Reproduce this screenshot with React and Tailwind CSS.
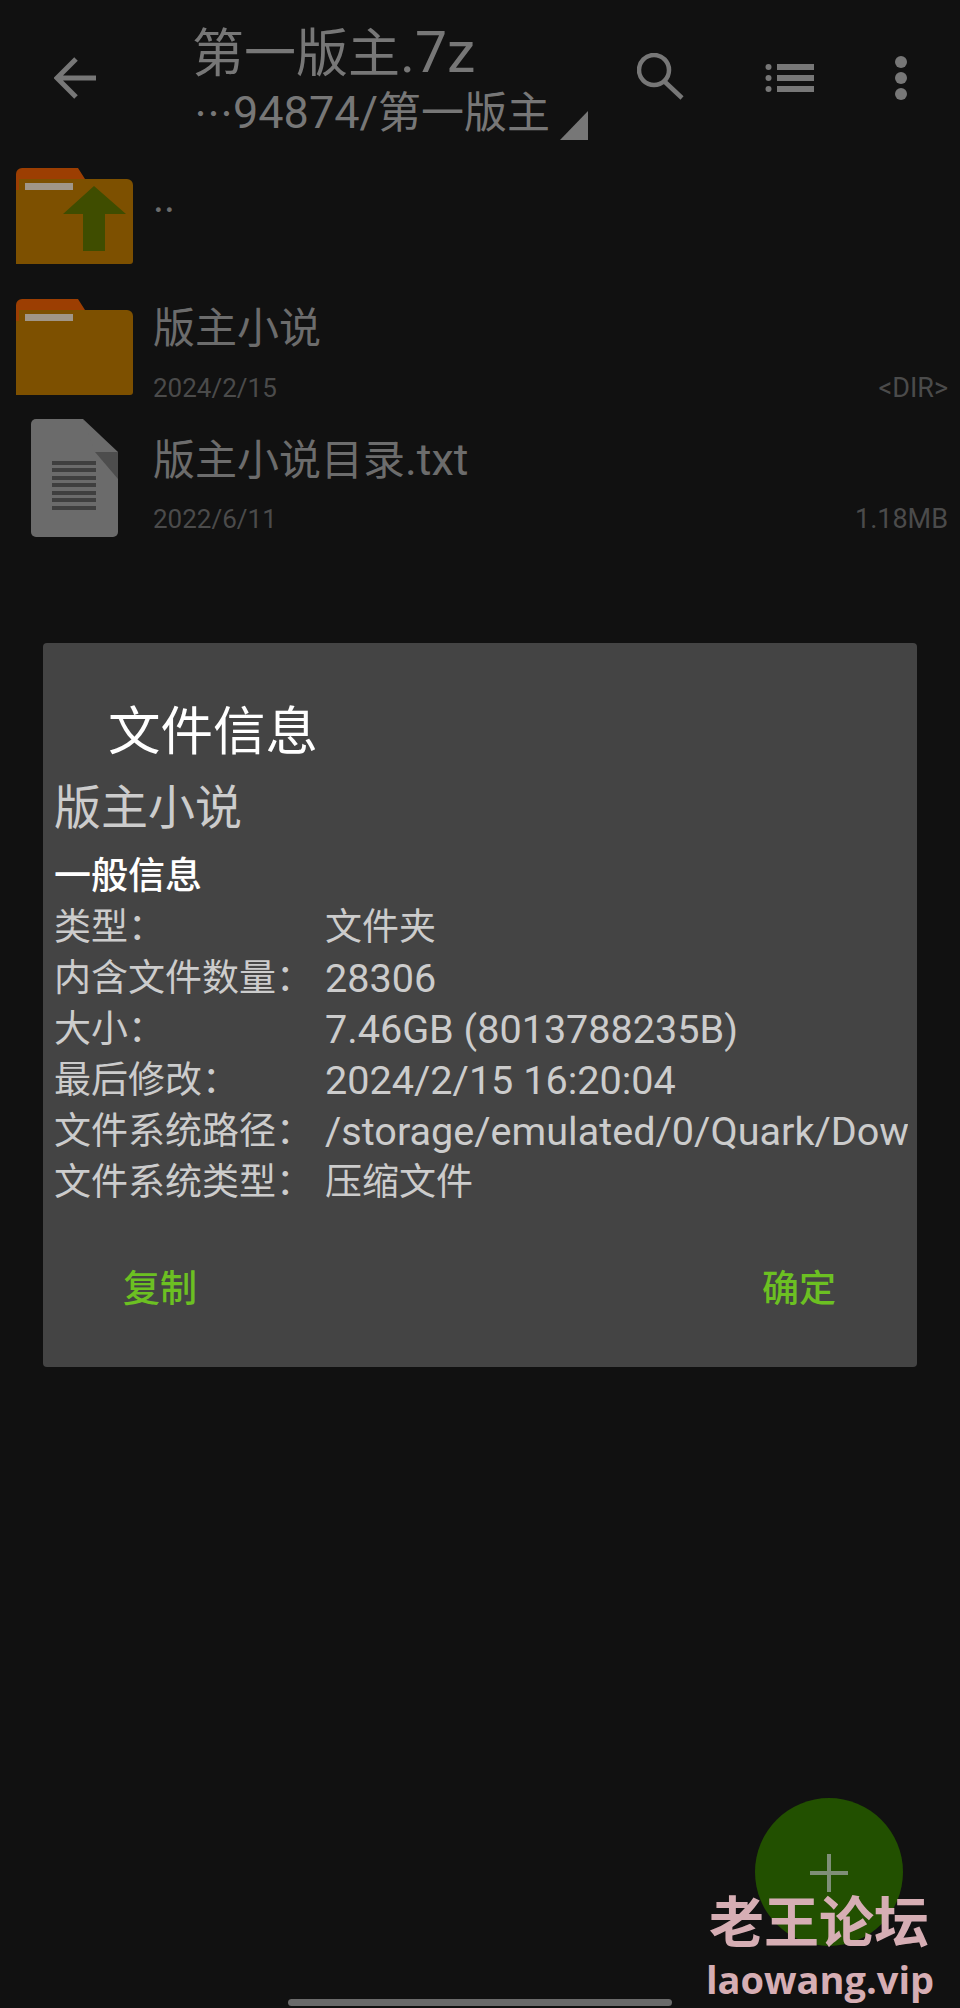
const font = { fontFamily: '"Roboto", "Noto Sans CJK SC", sans-serif' };

function FolderIcon({ up }) {
  return (
    <svg width="117" height="96" viewBox="0 0 117 96">
      <path d="M3 11H111a6 6 0 0 1 6 6V93a3 3 0 0 1-3 3H0V14a3 3 0 0 1 3-3Z" fill="#7d5000" />
      <path d="M0 22V6a6 6 0 0 1 6-6H62l7 11H3V22Z" fill="#9c3e02" />
      <rect x="9" y="15" width="48" height="7" fill="#a09688" />
      {up && <path d="M78 18 110 46H89V83H67V46H47Z" fill="#3f4d00" />}
    </svg>
  );
}

function DocIcon() {
  return (
    <svg width="87" height="118" viewBox="0 0 87 118">
      <path d="M5 0H52L87 58V113a5 5 0 0 1-5 5H5a5 5 0 0 1-5-5V5a5 5 0 0 1 5-5Z" fill="#6b6b6b" />
      <path d="M52 0 87 33H64Z" fill="#6b6b6b" />
      <path d="M64 33H87V60Z" fill="#4d4d4d" />
      {[42, 49, 57, 64, 72, 79, 87].map((y) => (
        <rect key={y} x="21" y={y} width="44" height="4" fill="#3f3f3f" />
      ))}
    </svg>
  );
}

// latin text in the reference runs a bit wider than the CJK next to it
function Latin({ children }) {
  return <span className="text-[1.07em]">{children}</span>;
}

function FileRow({ icon, name, date, size }) {
  return (
    <div className="flex h-[131px]">
      <div className="w-[153px] flex items-center justify-center pr-[4px] shrink-0">{icon}</div>
      <div className="flex-1 pr-[12px] pt-[23px]">
        <div className="h-[50px] text-[42px] leading-[50px] text-[#6c6c6c]">{name}</div>
        {date && (
          <div className="mt-[18px] flex justify-between text-[26px] leading-[32px] text-[#4b4b4b]">
            <span>{date}</span>
            <span className="text-[27px]">{size}</span>
          </div>
        )}
      </div>
    </div>
  );
}

const infoRows = [
  ["类型：", "文件夹"],
  ["内含文件数量：", <Latin>28306</Latin>],
  ["大小：", <Latin>7.46GB (8013788235B)</Latin>],
  ["最后修改：", <Latin>2024/2/15 16:20:04</Latin>],
  ["文件系统路径：", <Latin>/storage/emulated/0/Quark/Dow</Latin>],
  ["文件系统类型：", "压缩文件"],
];

function App() {
  return (
    <div className="relative h-[2008px] w-[960px] overflow-hidden bg-[#111111]" style={font}>
      <header className="flex h-[150px]">
        <div className="w-[194px] shrink-0 pl-[54px] pt-[57px]">
          <svg width="42" height="42" viewBox="0 0 42 42" fill="none" stroke="#777777" strokeWidth="5">
            <path d="M42 21H4M22 2 3 21l19 19" />
          </svg>
        </div>
        <div className="w-[420px] shrink-0 pt-[23px]">
          <div className="-ml-[2px] h-[60px] text-[52px] leading-[60px] text-[#777777]">
            第一版主<span className="text-[57px]">.7z</span>
          </div>
          <div className="mt-[5px] flex h-[50px] text-[43px] leading-[50px] text-[#777777]">
            <span className="whitespace-nowrap">
              <span className="text-[39px]">⋯</span>
              <span className="text-[45px]">94874/</span>第一版主
            </span>
            <svg className="ml-[10px] mt-[23px] shrink-0" width="28" height="29" viewBox="0 0 28 29">
              <path d="M28 0V29H0Z" fill="#777777" />
            </svg>
          </div>
        </div>
        <div className="pl-[23px] pt-[53px]">
          <svg width="47" height="47" viewBox="0 0 47 47" fill="none" stroke="#777777" strokeWidth="4.5">
            <circle cx="17" cy="17" r="15" />
            <path d="M27 28 45 45" />
          </svg>
        </div>
        <div className="pl-[81px] pt-[64px]">
          <svg width="49" height="28" viewBox="0 0 49 28" fill="#777777">
            <circle cx="3.5" cy="3" r="3" />
            <circle cx="3.5" cy="14" r="3" />
            <circle cx="3.5" cy="25" r="3" />
            <rect x="12" y="0" width="37" height="6" />
            <rect x="12" y="11" width="37" height="6" />
            <rect x="12" y="22" width="37" height="6" />
          </svg>
        </div>
        <div className="pl-[80px] pt-[56px]">
          <svg width="14" height="44" viewBox="0 0 14 44" fill="#777777">
            <circle cx="7" cy="6" r="6" />
            <circle cx="7" cy="22" r="6" />
            <circle cx="7" cy="38" r="6" />
          </svg>
        </div>
      </header>

      <FileRow icon={<FolderIcon up />} name=".." />
      <FileRow icon={<FolderIcon />} name="版主小说" date="2024/2/15" size="<DIR>" />
      <FileRow
        icon={<DocIcon />}
        name={<>版主小说目录<Latin>.txt</Latin></>}
        date="2022/6/11"
        size="1.18MB"
      />

      {/* file info dialog */}
      <div className="absolute left-[43px] top-[643px] h-[724px] w-[874px] overflow-hidden rounded-[4px] bg-[#444444] pl-[11px] pr-[9px] pt-[59px]">
        <div className="pl-[54px] text-[52.5px] leading-[60px] text-white">文件信息</div>
        <div className="mt-[18px] text-[47px] leading-[56px] text-[#cccccc]">版主小说</div>
        <div className="mt-[15px] text-[37px] font-medium leading-[51px] text-white">一般信息</div>
        {infoRows.map(([label, value]) => (
          <div key={label} className="flex h-[51px] text-[37px] leading-[51px] text-[#cccccc]">
            <span className="w-[271px] shrink-0">{label}</span>
            <span className="overflow-hidden whitespace-nowrap">{value}</span>
          </div>
        ))}
        <div className="mt-[57px] flex justify-between pl-[69px] pr-[72px] text-[37px] font-medium leading-[50px] text-[#6cc022]">
          <span>复制</span>
          <span>确定</span>
        </div>
      </div>

      {/* add button */}
      <div className="absolute left-[755px] top-[1798px] flex h-[148px] w-[148px] items-center justify-center rounded-full bg-[#225000]">
        <svg className="mt-[2px]" width="38" height="38" viewBox="0 0 38 38" stroke="#7f8f78" strokeWidth="4">
          <path d="M0 19H38M19 0V38" />
        </svg>
      </div>

      {/* watermark */}
      <div className="absolute left-[706px] top-[1890px] w-[226px] text-center font-bold text-[#d6aeb4]">
        <div className="text-[55px] leading-[66px]">老王论坛</div>
        <div className="mt-[1px] text-[38px] leading-[44px]" style={{ fontFamily: '"Open Sans", sans-serif' }}>laowang.vip</div>
      </div>

      {/* home indicator */}
      <div className="absolute left-[288px] top-[1999px] h-[7px] w-[384px] rounded-full bg-[#6a6a6a]" />
    </div>
  );
}

export default App;
